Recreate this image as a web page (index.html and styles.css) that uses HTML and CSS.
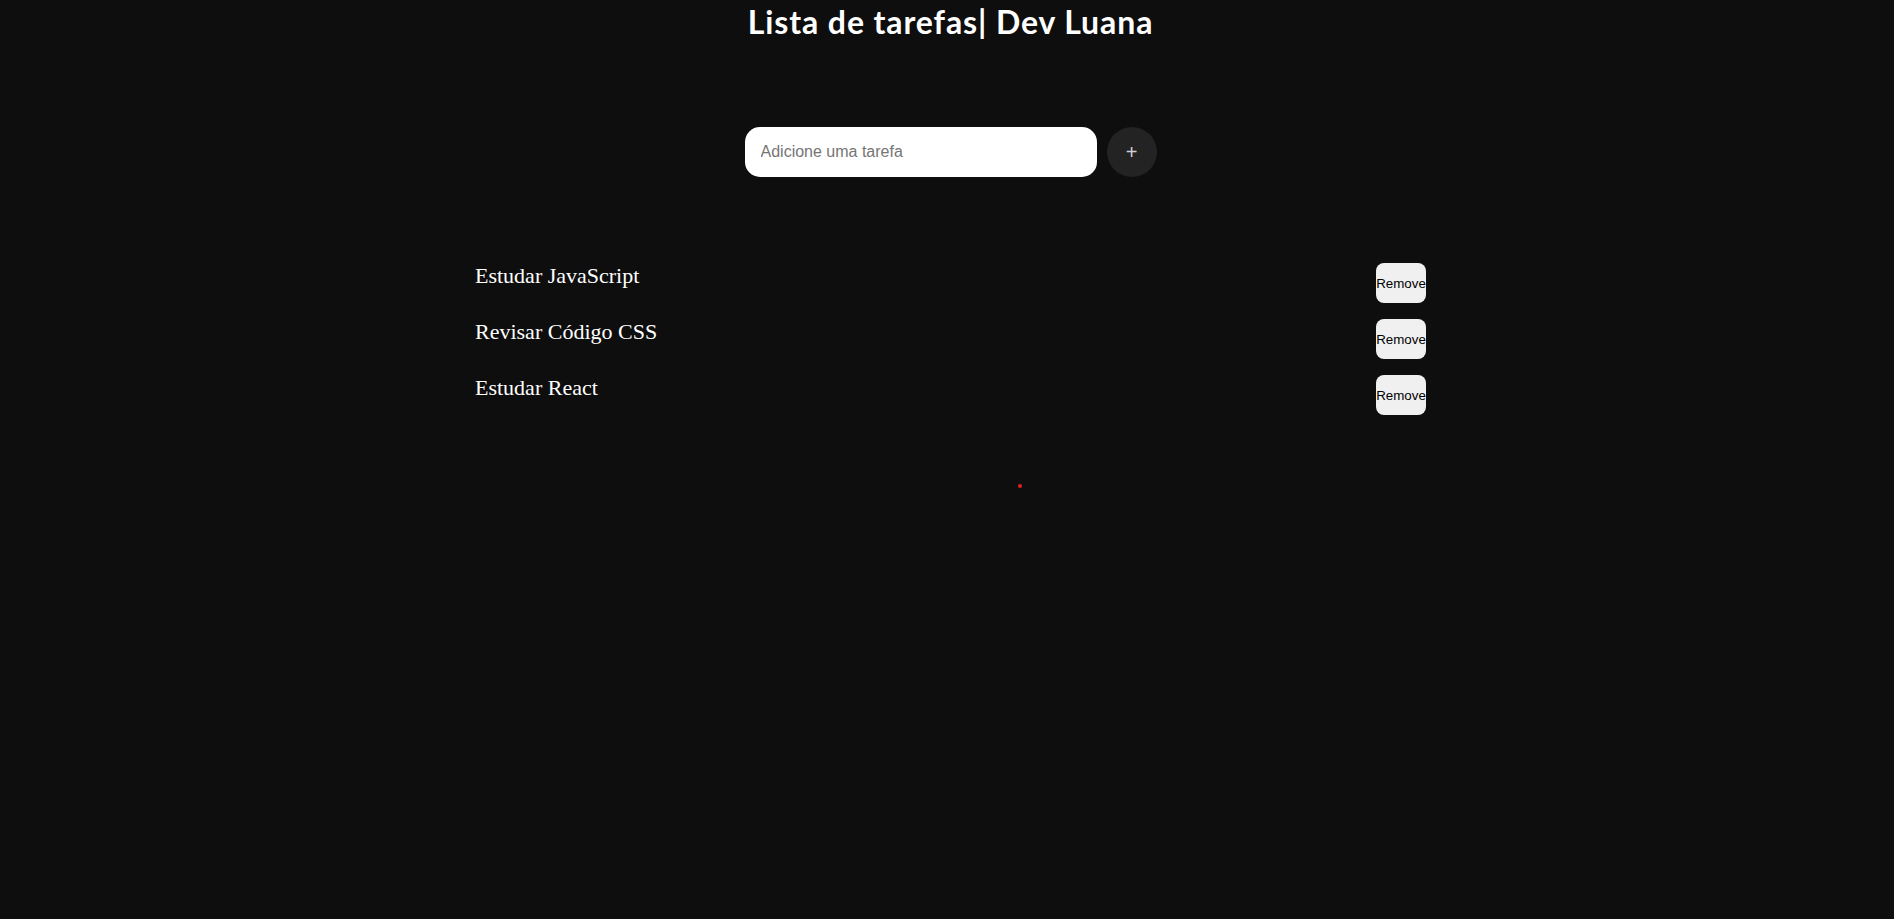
FILE: index.html
```html
<!DOCTYPE html>
<html lang="pt-BR">
<head>
<meta charset="UTF-8">
<title>Lista de tarefas</title>
<link rel="stylesheet" href="styles.css">
</head>
<body>
<main class="app">
  <h1 class="title">Lista de tarefas| Dev Luana</h1>
  <form class="add-form">
    <input class="task-input" type="text" placeholder="Adicione uma tarefa">
    <button class="add-btn" type="button">+</button>
  </form>
  <ul class="task-list">
    <li class="task"><span class="task-text">Estudar JavaScript</span><button class="remove-btn">Remove</button></li>
    <li class="task"><span class="task-text">Revisar Código CSS</span><button class="remove-btn">Remove</button></li>
    <li class="task"><span class="task-text">Estudar React</span><button class="remove-btn">Remove</button></li>
  </ul>
  <div class="dot"></div>
</main>
</body>
</html>
```
FILE: styles.css
```css
html, body {
  margin: 0;
  background: #0e0e0e;
  height: 100%;
}
body {
  padding-left: 7px;
  box-sizing: border-box;
}
.app {
  display: flex;
  flex-direction: column;
  align-items: center;
}
.title {
  margin: 0;
  padding-top: 3px;
  color: #ffffff;
  font-family: Lato, "Open Sans", sans-serif;
  font-weight: 700;
  font-size: 32px;
  line-height: 37px;
  letter-spacing: 0.9px;
}
.add-form {
  margin-top: 87px;
  display: flex;
  gap: 10px;
}
.task-input {
  width: 352px;
  height: 50px;
  box-sizing: border-box;
  border: none;
  border-radius: 15px;
  padding: 0 16px;
  font-family: "Liberation Sans", Arial, sans-serif;
  font-size: 16px;
  background: #ffffff;
  outline: none;
}
.task-input::placeholder {
  color: #757575;
}
.add-btn {
  width: 50px;
  height: 50px;
  border: none;
  border-radius: 50%;
  background: #232323;
  color: #cfcfcf;
  font-family: "Liberation Sans", Arial, sans-serif;
  font-size: 20px;
  padding: 0;
}
.task-list {
  list-style: none;
  margin: 86px 0 0;
  padding: 0;
  width: 951px;
  display: flex;
  flex-direction: column;
  gap: 16px;
}
.task {
  display: flex;
  justify-content: space-between;
}
.task-text {
  color: #ffffff;
  font-family: "Liberation Serif", "Times New Roman", serif;
  font-size: 22px;
}
.remove-btn {
  width: 50px;
  height: 40px;
  padding: 0;
  border: none;
  border-radius: 8px;
  background: #f0f0f0;
  color: #000000;
  font-family: "Liberation Sans", Arial, sans-serif;
  font-size: 13.333px;
  overflow: visible;
  white-space: nowrap;
  display: flex;
  align-items: center;
  justify-content: center;
}
.dot {
  align-self: flex-start;
  margin-top: 69px;
  margin-left: 1011px;
  width: 4px;
  height: 4px;
  border-radius: 50%;
  background: #e02020;
}
```
